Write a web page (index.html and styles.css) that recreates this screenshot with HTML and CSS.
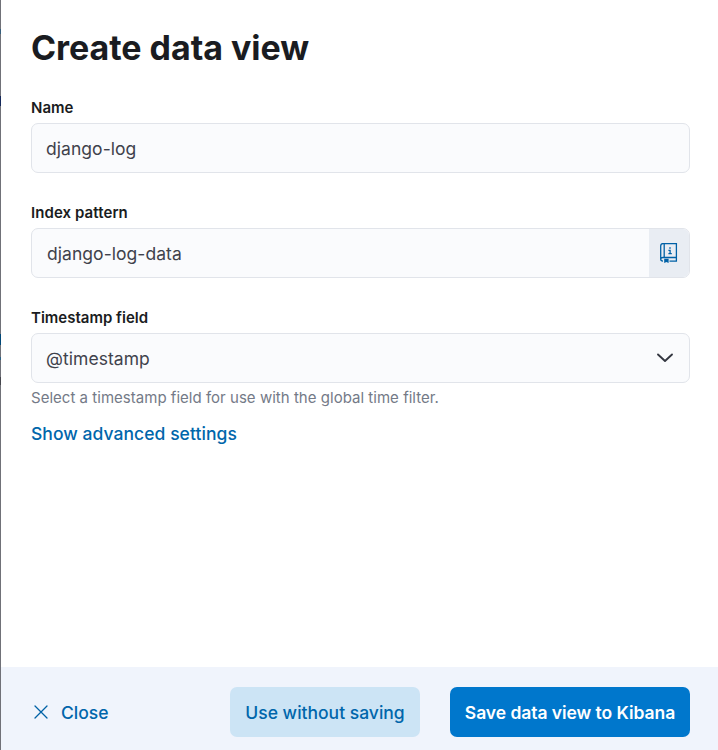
FILE: index.html
```html
<!DOCTYPE html>
<html lang="en">
<head>
<meta charset="utf-8">
<title>Create data view</title>
<link rel="stylesheet" href="styles.css">
</head>
<body>
<main class="flyout">
  <form class="content">
    <h1 class="title">Create data view</h1>
    <div class="row">
      <label class="label">Name</label>
      <div class="field"><span class="value">django-log</span></div>
    </div>
    <div class="row">
      <label class="label label-wide">Index pattern</label>
      <div class="field"><span class="value value-indent">django-log-data</span>
        <span class="append"><svg width="18" height="20" viewBox="0 0 18 20" fill="none" stroke="#0061a6" stroke-width="1.3"><path d="M3 .6h13.400v13.900H3M4.200.6v13.900M3 .6Q.7.600.7 3v13M3 14.500Q.7 14.500.7 16.300T3 18.100M9.500 18.100h6.900v-3.600"/><path d="M4.200 15.800v4.200l2.200-1 2.200 1v-4.200z" fill="#0061a6" stroke="none"/><path d="M8.400 7.300h1.700v3.400M8.400 10.700h3.400M9.300 5h1.400"/></svg></span>
      </div>
    </div>
    <div class="row row-last">
      <label class="label">Timestamp field</label>
      <div class="field"><span class="value">@timestamp</span>
        <svg class="chevron" width="18" height="12" viewBox="0 0 18 12" fill="none" stroke="#343741" stroke-width="1.900" stroke-linecap="round" stroke-linejoin="round"><path d="M2 2.500l7 6.500 7-6.500"/></svg>
      </div>
      <p class="help">Select a timestamp field for use with the global time filter.</p>
    </div>
    <a class="advanced">Show advanced settings</a>
  </form>
  <footer class="footer">
    <button class="close"><svg width="14" height="14" viewBox="0 0 14 14" fill="none" stroke="#0061a6" stroke-width="1.300" stroke-linecap="round"><path d="M1 1l12 12M13 1L1 13"/></svg><span>Close</span></button>
    <button class="button secondary">Use without saving</button>
    <button class="button primary">Save data view to Kibana</button>
  </footer>
</main>
</body>
</html>
```

FILE: styles.css
```css
* { box-sizing: border-box; }
body { margin: 0; font-family: Inter, sans-serif; color: #3f424c; background: #fff; }
.flyout {
  height: 750px; display: flex; flex-direction: column; padding-left: 1px;
  background: linear-gradient(#707178 0 29px, #365f7c 29px 34px, #707178 34px 96px, #14285a 96px 106px, #707178 106px 334px, #004777 334px 345px, #707178 345px 357px, #2b6184 357px 360px, #707178 360px 377px, #45464d 377px 385px, #707178 385px) left / 1px 100% no-repeat;
}
.content { flex: 1; padding: 27px 28px 0 30px; }
.title { margin: 0 0 29px; font-size: 34px; line-height: 42px; font-weight: 700; letter-spacing: -.05px; color: #1a1c21; }
.row { margin-bottom: 30px; }
.row-last { margin-bottom: 13px; }
.label { display: block; height: 25px; font-size: 15px; line-height: 19px; font-weight: 600; color: #1a1c21; }
.label-wide { letter-spacing: .08px; }
.field { height: 50px; display: flex; align-items: center; border: 1px solid #e1e4ea; border-radius: 7px; background: #fafbfd; overflow: hidden; }
.value { flex: 1; padding: 2px 0 0 14px; font-size: 17.500px; line-height: 24px; letter-spacing: .05px; }
.value-indent { padding-left: 15px; }
.append { width: 40px; height: 50px; display: flex; align-items: center; justify-content: center; padding-right: 1px; background: #e9edf3; }
.chevron { margin-right: 15px; }
.help { margin: 5px 0 0; font-size: 15px; line-height: 20px; letter-spacing: .025px; color: #747a87; }
.advanced { font-size: 17.500px; line-height: 25px; font-weight: 500; letter-spacing: .05px; color: #0066ab; }
.footer { height: 83px; display: flex; align-items: center; padding: 7px 28px 0 32px; background: #f0f4fc; }
button { border: 0; font: 500 17.500px/24px Inter, sans-serif; padding: 0; }
.close { display: flex; align-items: center; gap: 13px; margin-right: auto; color: #0066ab; background: none; }
.close svg { margin-left: 1px; }
.close span { padding-top: 2px; }
.button { height: 50px; padding-top: 2px; border-radius: 7px; }
.secondary { width: 190px; margin-right: 30px; color: #0066ab; background: #cce4f5; }
.primary { width: 240px; font-weight: 600; letter-spacing: -.05px; color: #fff; background: #0077cc; }
```
